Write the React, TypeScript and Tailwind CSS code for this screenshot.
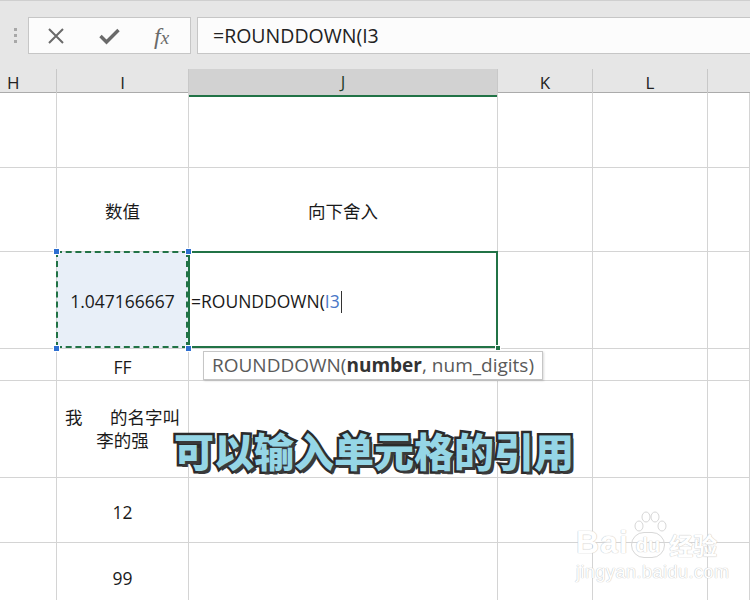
import React from "react";

const FONT = "font-['Open_Sans','Noto_Sans_CJK_SC',sans-serif]";
const COLS = "grid grid-cols-[57px_132px_309px_95px_115px_1fr]";
const ROWS = [75, 84, 97, 32, 97, 65, 60];

function Cell({ children, className = "" }: { children?: React.ReactNode; className?: string }) {
  return (
    <div className={`relative flex items-center justify-center border-r border-b border-[#d4d4d4] pt-[3px] text-[17.5px] text-[#1a1a1a] ${className}`}>
      {children}
    </div>
  );
}

function Corner({ className }: { className: string }) {
  return <span className={`absolute z-20 h-[7px] w-[7px] bg-[#2e6fd1] border border-white ${className}`} />;
}

export default function App() {
  return (
    <div className={`relative h-[600px] w-[750px] overflow-hidden bg-white ${FONT}`}>
      {/* formula bar */}
      <div className="flex h-[69px] items-start gap-[6px] border-t border-[#cfcfcf] bg-[#e6e6e6] pt-[16px]">
        <div className="flex h-[36px] w-[28px] flex-col items-center justify-center gap-[3px] pl-[2px]">
          <span className="h-[3px] w-[3px] bg-[#a8a8a8]" />
          <span className="h-[3px] w-[3px] bg-[#a8a8a8]" />
          <span className="h-[3px] w-[3px] bg-[#a8a8a8]" />
        </div>
        <div className="-ml-[6px] flex h-[37px] w-[163px] items-center border border-[#c6c6c6] bg-[#fcfcfc]">
          <svg className="ml-[18px]" width="18" height="18" viewBox="0 0 18 18">
            <path d="M2 2 L16 16 M16 2 L2 16" stroke="#6a6a6a" strokeWidth="2" />
          </svg>
          <svg className="ml-[34px]" width="21" height="18" viewBox="0 0 21 18">
            <path d="M1.5 9 L7.5 15 L19.5 3" stroke="#6a6a6a" strokeWidth="3.4" fill="none" />
          </svg>
          <span className="ml-[34px] font-['Liberation_Serif',serif] text-[24px] leading-none italic text-[#6a6a6a]">
            f<span className="text-[19px]">x</span>
          </span>
        </div>
        <div className="flex h-[37px] flex-1 items-center border-y border-l border-[#c6c6c6] bg-[#fcfcfc] pl-[15px] text-[19.5px] text-[#222]">
          =ROUNDDOWN(I3
        </div>
      </div>

      {/* column headers */}
      <div className={`${COLS} h-[24px] border-b border-[#ababab] bg-[#e6e6e6] text-[17px] text-[#222]`}>
        <div className="flex items-center border-r border-[#c8c8c8] pl-[7px]">H</div>
        <div className="flex items-center justify-center border-r border-[#c8c8c8]">I</div>
        <div className="-mb-[1px] flex items-center justify-center border-r border-b-2 border-[#c8c8c8] border-b-[#217346] bg-[#d2d2d2] text-[#1f3f2a]">J</div>
        <div className="flex items-center justify-center border-r border-[#c8c8c8]">K</div>
        <div className="flex items-center justify-center border-r border-[#c8c8c8]">L</div>
        <div />
      </div>

      {/* sheet */}
      <div className={COLS} style={{ gridTemplateRows: ROWS.map((h) => `${h}px`).join(" ") }}>
        {/* row 1 */}
        <Cell /><Cell /><Cell /><Cell /><Cell /><Cell />
        {/* row 2 */}
        <Cell /><Cell>数值</Cell><Cell>向下舍入</Cell><Cell /><Cell /><Cell />
        {/* row 3 */}
        <Cell />
        <Cell className="bg-[#e8eff8]">
          <div className="pointer-events-none absolute -left-[1px] -top-[1px] right-0 bottom-0 z-10 border-2 border-dashed border-[#217346]" />
          <Corner className="-left-[4px] -top-[4px]" />
          <Corner className="-right-[4px] -top-[4px]" />
          <Corner className="-left-[4px] -bottom-[4px]" />
          <Corner className="-right-[4px] -bottom-[4px]" />
          1.047166667
        </Cell>
        <Cell className="justify-start">
          <div className="pointer-events-none absolute -left-[1px] -top-[1px] -right-[1px] bottom-0 z-10 border-2 border-[#217346]" />
          <span className="absolute -bottom-[3px] -right-[4px] z-20 h-[6px] w-[6px] bg-[#217346] border border-white" />
          <span className="pl-[2px]">=ROUNDDOWN(<span className="text-[#4a78c8]">I3</span></span>
          <span className="ml-[1px] h-[22px] w-px bg-[#333]" />
        </Cell>
        <Cell /><Cell /><Cell />
        {/* row 4 */}
        <Cell /><Cell className="pt-[5px]">FF</Cell><Cell /><Cell /><Cell /><Cell />
        {/* row 5 */}
        <Cell />
        <Cell className="pt-0 pb-[3px]">
          <div className="flex flex-col items-center leading-[23px]">
            <span className="whitespace-pre">我{"      "}的名字叫</span>
            <span>李的强</span>
          </div>
        </Cell>
        <Cell /><Cell /><Cell /><Cell />
        {/* row 6 */}
        <Cell /><Cell className="pt-[5px]">12</Cell><Cell /><Cell /><Cell /><Cell />
        {/* row 7 */}
        <Cell /><Cell className="items-start pt-[22px]">99</Cell><Cell /><Cell /><Cell /><Cell />
      </div>

      {/* function tooltip */}
      <div className="absolute left-[203px] top-[351px] z-30 flex h-[29px] items-center border border-[#c6c6c6] bg-white px-[8px] text-[19px] text-[#5a5a5a] shadow-[1px_1px_2px_rgba(0,0,0,0.15)]">
        ROUNDDOWN(<b className="text-[#333]">number</b>, num_digits)
      </div>

      {/* caption */}
      <div className="absolute left-[174px] top-[420px] z-40 font-['Noto_Sans_CJK_SC',sans-serif] text-[40px] font-black text-[#95d6e6] [-webkit-text-stroke:5px_#2b2b2b] [paint-order:stroke_fill] [text-shadow:3px_3px_0_#3a3a3a]">
        可以输入单元格的引用
      </div>

      {/* watermark */}
      <div className="absolute left-[576px] top-[526px] z-30 flex flex-col items-start text-white [text-shadow:0_0_1px_#c4c4c4,0_0_1px_#c4c4c4]">
        <div className="flex items-end">
          <span className="font-['Liberation_Sans',sans-serif] text-[32px] font-bold leading-none tracking-[1px]">Bai</span>
          <span className="relative ml-[2px] rounded-full border border-[#d8d8d8] px-[4px] font-['Liberation_Sans',sans-serif] text-[20px] font-bold leading-[24px]">
            du
            <svg className="absolute -top-[22px] left-[1px]" width="34" height="22" viewBox="0 0 34 22">
              <g fill="white" stroke="#cccccc" strokeWidth="0.8">
                <ellipse cx="6" cy="15" rx="4" ry="5" />
                <ellipse cx="13" cy="6" rx="4" ry="5" />
                <ellipse cx="22" cy="6" rx="4" ry="5" />
                <ellipse cx="29" cy="15" rx="4" ry="5" />
              </g>
            </svg>
          </span>
          <span className="ml-[4px] text-[24px] font-bold leading-none">经验</span>
        </div>
        <span className="mt-[5px] font-['Liberation_Sans',sans-serif] text-[18px] leading-none tracking-[0.5px]">jingyan.baidu.com</span>
      </div>
    </div>
  );
}
